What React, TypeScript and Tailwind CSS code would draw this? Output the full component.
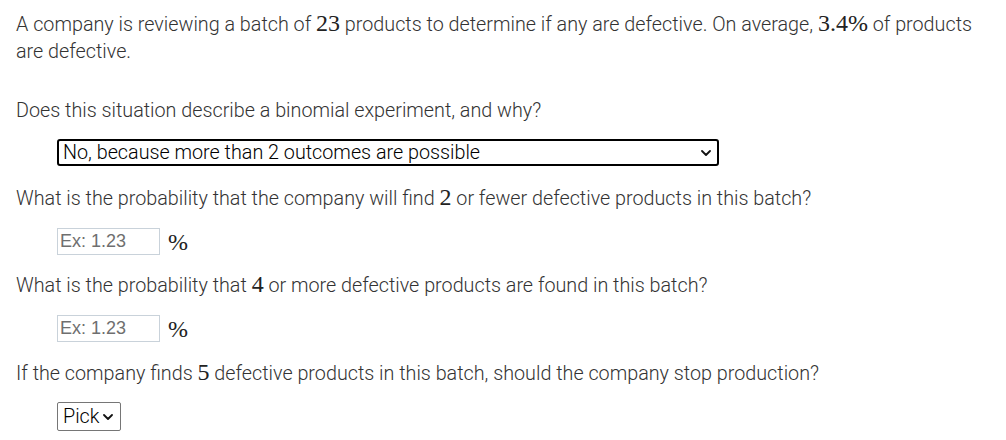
import React from 'react';

const M = ({ children }: { children: React.ReactNode }) => (
  <span className="text-[24px] leading-none text-[#222]" style={{ fontFamily: '"Liberation Serif", "DejaVu Serif", serif' }}>
    {children}
  </span>
);

const Chevron = ({ className = '' }: { className?: string }) => (
  <svg className={className} viewBox="0 0 10 6" fill="none">
    <path d="M1 1l4 4 4-4" stroke="#111" strokeWidth="1.8" strokeLinecap="round" strokeLinejoin="round" />
  </svg>
);

const PercentInput = () => (
  <div className="flex items-center ml-[41px] gap-[8px]">
    <input
      placeholder="Ex: 1.23"
      className="w-[103px] h-[27px] border border-[#c9d2da] px-[2px] text-[18px] text-[#333] placeholder:text-[#6f6f6f] outline-none"
      style={{ fontFamily: '"Liberation Sans", Arial, sans-serif' }}
    />
    <M>%</M>
  </div>
);

export default function App() {
  return (
    <div className="bg-white w-[1006px] h-[440px] pl-4 pr-3 text-[19.75px] font-light leading-[27px] text-[#333] overflow-hidden" style={{ fontFamily: 'Roboto, "Noto Sans", sans-serif' }}>
      <p className="pt-[11px]">
        A company is reviewing a batch of <M>23</M> products to determine if any are defective. On average, <M>3.4%</M> of products are defective.
      </p>

      <p className="mt-[32px]">Does this situation describe a binomial experiment, and why?</p>

      <div className="ml-[41px] mt-[15px] w-[662px] h-[27px] border-2 border-black rounded-[3px] flex items-center justify-between pl-[4px] pr-[6px] text-black leading-none">
        <span>No, because more than 2 outcomes are possible</span>
        <Chevron className="w-[10px] h-[6px]" />
      </div>

      <p className="mt-[19px]">
        What is the probability that the company will find <M>2</M> or fewer defective products in this batch?
      </p>
      <div className="mt-[16px]">
        <PercentInput />
      </div>

      <p className="mt-[17px]">
        What is the probability that <M>4</M> or more defective products are found in this batch?
      </p>
      <div className="mt-[16px]">
        <PercentInput />
      </div>

      <p className="mt-[18px]">
        If the company finds <M>5</M> defective products in this batch, should the company stop production?
      </p>
      <div className="mt-[15px] ml-[41px] w-[64px] h-[29px] border border-[#767676] rounded-[2px] flex items-center gap-[4px] pl-[5px] text-black leading-none">
        <span>Pick</span>
        <Chevron className="w-[10px] h-[6px]" />
      </div>
    </div>
  );
}
